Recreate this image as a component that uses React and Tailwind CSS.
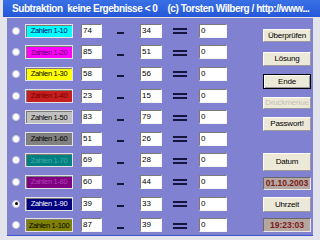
const ROWS = [
  { label: "Zahlen 1-10", bg: "bg-[#00ffff]", fg: "text-[#00006a]", a: 74, b: 34 },
  { label: "Zahlen 1-20", bg: "bg-[#ff00ff]", fg: "text-[#5a005a]", a: 85, b: 51 },
  { label: "Zahlen 1-30", bg: "bg-[#ffff00]", fg: "text-black", a: 58, b: 56 },
  { label: "Zahlen 1-40", bg: "bg-[#c41e1e]", fg: "text-[#7a0000]", a: 23, b: 15 },
  { label: "Zahlen 1-50", bg: "bg-[#c0c0c0]", fg: "text-black", a: 83, b: 79 },
  { label: "Zahlen 1-60", bg: "bg-[#808080]", fg: "text-black", a: 51, b: 26 },
  { label: "Zahlen 1-70", bg: "bg-[#008080]", fg: "text-[#48a8a8]", a: 69, b: 28 },
  { label: "Zahlen 1-80", bg: "bg-[#800080]", fg: "text-[#b040b0]", a: 60, b: 44 },
  { label: "Zahlen 1-90", bg: "bg-[#000080]", fg: "text-white", a: 39, b: 33, checked: true },
  { label: "Zahlen 1-100", bg: "bg-[#808000]", fg: "text-black", a: 87, b: 39 },
];

function Field({ value, w }) {
  return (
    <div
      className={`${w} h-[14px] bg-white border border-t-[#7a7a7a] border-l-[#7a7a7a] border-b-[#f4f4f4] border-r-[#f4f4f4] text-[8px] leading-[12px] pl-[1px] text-black`}
    >
      {value}
    </div>
  );
}

function Btn({ children, h, mt, disabled, focus }) {
  return (
    <div
      className={`${h} ${mt} w-[48px] flex items-center justify-center bg-[#ece9d8] text-[8px] tracking-[-0.2px] ${
        focus
          ? "border border-black shadow-[inset_1px_1px_0_#fff,inset_-1px_-1px_0_#9a9a9a]"
          : "border border-t-white border-l-white border-b-[#9a9a9a] border-r-[#9a9a9a]"
      } ${disabled ? "text-[#c4c0b4]" : "text-black"}`}
    >
      {children}
    </div>
  );
}

function Display({ children, h, mt }) {
  return (
    <div
      className={`${h} ${mt} w-[48px] flex items-center justify-center bg-[#b5a79f] border border-t-[#6a6a6a] border-l-[#6a6a6a] border-b-[#e8e8e8] border-r-[#e8e8e8] text-[8.5px] font-bold text-[#7c1a1a]`}
    >
      {children}
    </div>
  );
}

export default function App() {
  return (
    <div className="w-[320px] h-[240px] bg-[#e4e4ec] overflow-hidden font-['Liberation_Sans',Arial,sans-serif]">
      {/* title bar */}
      <div className="ml-[3px] h-[17px] bg-gradient-to-b from-[#3a70e6] to-[#2458d8] flex items-center pl-[9px] text-white font-bold text-[10px] tracking-[-0.45px] whitespace-pre">
        <span>Subtraktion  keine Ergebnisse &lt; 0</span>
        <span className="ml-[10px]">(c) Torsten Wilberg / http://www...</span>
      </div>

      <div className="mx-[7px] mt-[1px] h-[218px] bg-[#8181d1] border-b border-[#3b55c8] flex">
        {/* rows */}
        <div className="w-[256px] pl-[5px] pt-[2px]">
          {ROWS.map((r) => (
            <div key={r.label} className="h-[21.6px] flex items-center">
              <div className="w-[8px] h-[8px] rounded-full bg-white border border-[#c8c8d8] flex items-center justify-center">
                {r.checked && <div className="w-[3px] h-[3px] rounded-full bg-black" />}
              </div>
              <div
                className={`ml-[5px] w-[48px] h-[14px] ${r.bg} ${r.fg} border border-[#e2e2e2] shadow-[inset_1px_1px_0_#7a7a7a] flex items-center justify-center text-[7.5px] tracking-[-0.3px]`}
              >
                {r.label}
              </div>
              <div className="ml-[8px]">
                <Field value={r.a} w="w-[21px]" />
              </div>
              <div className="ml-[15px] w-[7px] h-[2px] mt-[5px] bg-[#14143c]" />
              <div className="ml-[16px]">
                <Field value={r.b} w="w-[22px]" />
              </div>
              <div className="ml-[11px] w-[14px] mt-[1px] flex flex-col gap-[2px]">
                <div className="h-[2px] bg-[#14143c]" />
                <div className="h-[2px] bg-[#14143c]" />
              </div>
              <div className="ml-[12px]">
                <Field value={0} w="w-[28px]" />
              </div>
            </div>
          ))}
        </div>

        {/* buttons */}
        <div className="flex flex-col">
          <Btn h="h-[13px]" mt="mt-[11px]">Überprüfen</Btn>
          <Btn h="h-[14px]" mt="mt-[10px]">Lösung</Btn>
          <Btn h="h-[15px]" mt="mt-[8px]" focus>Ende</Btn>
          <Btn h="h-[12px]" mt="mt-[8px]" disabled>Druckmenue</Btn>
          <Btn h="h-[14px]" mt="mt-[8px]">Passwort!</Btn>
          <Btn h="h-[18px]" mt="mt-[22px]">Datum</Btn>
          <Display h="h-[13px]" mt="mt-[6px]">01.10.2003</Display>
          <Btn h="h-[15px]" mt="mt-[7px]">Uhrzeit</Btn>
          <Display h="h-[14px]" mt="mt-[6px]">19:23:03</Display>
        </div>
      </div>
    </div>
  );
}
